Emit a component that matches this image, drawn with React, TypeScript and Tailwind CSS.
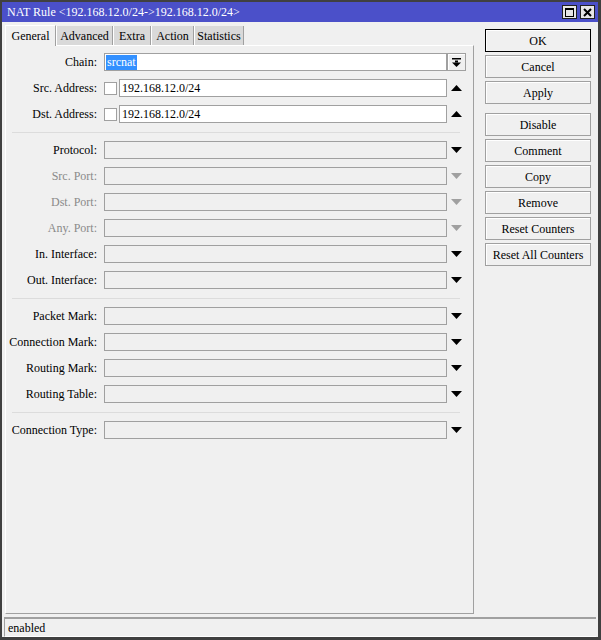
import React from "react";

/* MikroTik WinBox: NAT rule dialog, General tab */

type Arrow = "down" | "up" | "downGray" | "combo" | "none";

const font = { fontFamily: '"Liberation Serif", "Times New Roman", serif' };

function DownArrow({ gray }: { gray?: boolean }) {
  return (
    <svg width="11" height="6" viewBox="0 0 11 6">
      <polygon points="0,0 11,0 5.5,6" fill={gray ? "#a0a0a0" : "#000"} />
    </svg>
  );
}

function UpArrow() {
  return (
    <svg width="11" height="6" viewBox="0 0 11 6">
      <polygon points="0,6 11,6 5.5,0" fill="#000" />
    </svg>
  );
}

function ComboButton() {
  return (
    <div className="flex h-full w-[19px] items-center justify-center border border-[#a0a0a0] bg-[#f0f0f0] shadow-[inset_1px_1px_0_#ffffff]">
      <svg width="9" height="9" viewBox="0 0 9 9">
        <rect x="0" y="0" width="9" height="1.5" fill="#000" />
        <rect x="3" y="2.5" width="3" height="2" fill="#000" />
        <polygon points="0,4.5 9,4.5 4.5,9" fill="#000" />
      </svg>
    </div>
  );
}

function Row({
  label,
  arrow = "down",
  dim,
  children,
}: {
  label: string;
  arrow?: Arrow;
  dim?: boolean;
  children?: React.ReactNode;
}) {
  return (
    <div className="flex h-[18px] items-center">
      <div
        className={`w-[91px] shrink-0 text-right text-[12px] leading-none ${
          dim ? "text-[#8a8a8a]" : "text-black"
        }`}
      >
        {label}
      </div>
      <div className="ml-[7px] flex h-full flex-1 items-center">
        {children ?? (
          <div className="h-full flex-1 border border-[#a0a0a0] bg-[#f0f0f0]" />
        )}
        {arrow === "combo" ? (
          <ComboButton />
        ) : (
          <div className="flex h-full w-[19px] shrink-0 items-center justify-center">
            {arrow === "down" && <DownArrow />}
            {arrow === "downGray" && <DownArrow gray />}
            {arrow === "up" && <UpArrow />}
          </div>
        )}
      </div>
    </div>
  );
}

function AddressField({ value }: { value: string }) {
  return (
    <>
      <div className="mr-[2px] h-[13px] w-[13px] shrink-0 border border-[#a0a0a0] bg-white" />
      <div className="flex h-full flex-1 items-center border border-[#a0a0a0] bg-white pl-[2px] text-[12px] leading-none">
        {value}
      </div>
    </>
  );
}

function Separator() {
  return <div className="mx-[6px] mt-[9px] mb-[8px] h-px bg-[#dcdcdc]" />;
}

const tabs = [
  { name: "General", w: "w-[51px]" },
  { name: "Advanced", w: "w-[57px]" },
  { name: "Extra", w: "w-[38px]" },
  { name: "Action", w: "w-[43px]" },
  { name: "Statistics", w: "w-[50px]" },
];

const buttons = [
  ["OK", "Cancel", "Apply"],
  ["Disable", "Comment", "Copy", "Remove", "Reset Counters", "Reset All Counters"],
];

export default function App() {
  return (
    <div
      className="flex h-[640px] w-[601px] flex-col border-2 border-r-[3px] border-b-[3px] border-[#404040] bg-[#f0f0f0] text-black"
      style={font}
    >
      {/* title bar */}
      <div className="flex h-[20px] shrink-0 items-center bg-[#4b50c9] pl-[5px] pr-[3px]">
        <span className="flex-1 text-[12px] leading-none text-white">
          NAT Rule &lt;192.168.12.0/24-&gt;192.168.12.0/24&gt;
        </span>
        <div className="flex gap-[3px]">
          <div className="flex h-[14px] w-[15px] items-center justify-center border border-[#202020] bg-[#e6e6e6]">
            <div className="h-[9px] w-[9px] border border-black border-t-2" />
          </div>
          <div className="flex h-[14px] w-[15px] items-center justify-center border border-[#202020] bg-[#e6e6e6]">
            <svg width="9" height="9" viewBox="0 0 9 9">
              <path d="M1 1 L8 8 M8 1 L1 8" stroke="#000" strokeWidth="2" />
            </svg>
          </div>
        </div>
      </div>

      {/* main */}
      <div className="flex min-h-0 flex-1 pt-[3px] pb-[3px] pl-[3px]">
        <div className="flex w-[469px] shrink-0 flex-col">
          <div className="flex h-[20px] items-end">
            {tabs.map((t, i) =>
              i === 0 ? (
                <div
                  key={t.name}
                  className={`${t.w} relative z-10 -mb-px flex h-[21px] items-center justify-center border-t border-l border-white border-r border-r-[#a0a0a0] bg-[#f0f0f0] text-[12px] leading-none`}
                >
                  {t.name}
                </div>
              ) : (
                <div
                  key={t.name}
                  className={`${t.w} flex h-[19px] items-center justify-center border-l border-white border-r border-r-[#a0a0a0] bg-[#d9d9d9] text-[12px] leading-none`}
                >
                  {t.name}
                </div>
              )
            )}
          </div>
          <div className="flex flex-1 flex-col border-t border-l border-t-white border-l-white border-r border-b border-r-[#a0a0a0] border-b-[#a0a0a0] pt-[7px] pr-[7px]">
            <div className="flex flex-col gap-[8px]">
              <Row label="Chain:" arrow="combo">
                <div className="flex h-full flex-1 items-center border border-[#a0a0a0] bg-white pl-px">
                  <span className="bg-[#3390ff] px-px text-[12px] leading-[15px] text-white">
                    srcnat
                  </span>
                </div>
              </Row>
              <Row label="Src. Address:" arrow="up">
                <AddressField value="192.168.12.0/24" />
              </Row>
              <Row label="Dst. Address:" arrow="up">
                <AddressField value="192.168.12.0/24" />
              </Row>
            </div>
            <Separator />
            <div className="flex flex-col gap-[8px]">
              <Row label="Protocol:" />
              <Row label="Src. Port:" arrow="downGray" dim />
              <Row label="Dst. Port:" arrow="downGray" dim />
              <Row label="Any. Port:" arrow="downGray" dim />
              <Row label="In. Interface:" />
              <Row label="Out. Interface:" />
            </div>
            <Separator />
            <div className="flex flex-col gap-[8px]">
              <Row label="Packet Mark:" />
              <Row label="Connection Mark:" />
              <Row label="Routing Mark:" />
              <Row label="Routing Table:" />
            </div>
            <Separator />
            <Row label="Connection Type:" />
          </div>
        </div>

        {/* buttons */}
        <div className="ml-[11px] mt-[4px] flex w-[106px] flex-col gap-[9px]">
          {buttons.map((group, gi) => (
            <div key={gi} className="flex flex-col gap-[3px]">
              {group.map((b) => (
                <div
                  key={b}
                  className={`flex h-[23px] items-center justify-center border bg-[#f0f0f0] text-[12px] leading-none shadow-[inset_1px_1px_0_#ffffff] ${
                    b === "OK" ? "border-black" : "border-[#a0a0a0]"
                  }`}
                >
                  {b}
                </div>
              ))}
            </div>
          ))}
        </div>
      </div>

      {/* status bar */}
      <div className="flex h-[20px] shrink-0 px-[2px]">
        <div className="flex flex-1 items-center border-t-2 border-l border-[#a0a0a0] border-b border-b-white pl-[3px] text-[12px] leading-none">
          enabled
        </div>
      </div>
    </div>
  );
}
